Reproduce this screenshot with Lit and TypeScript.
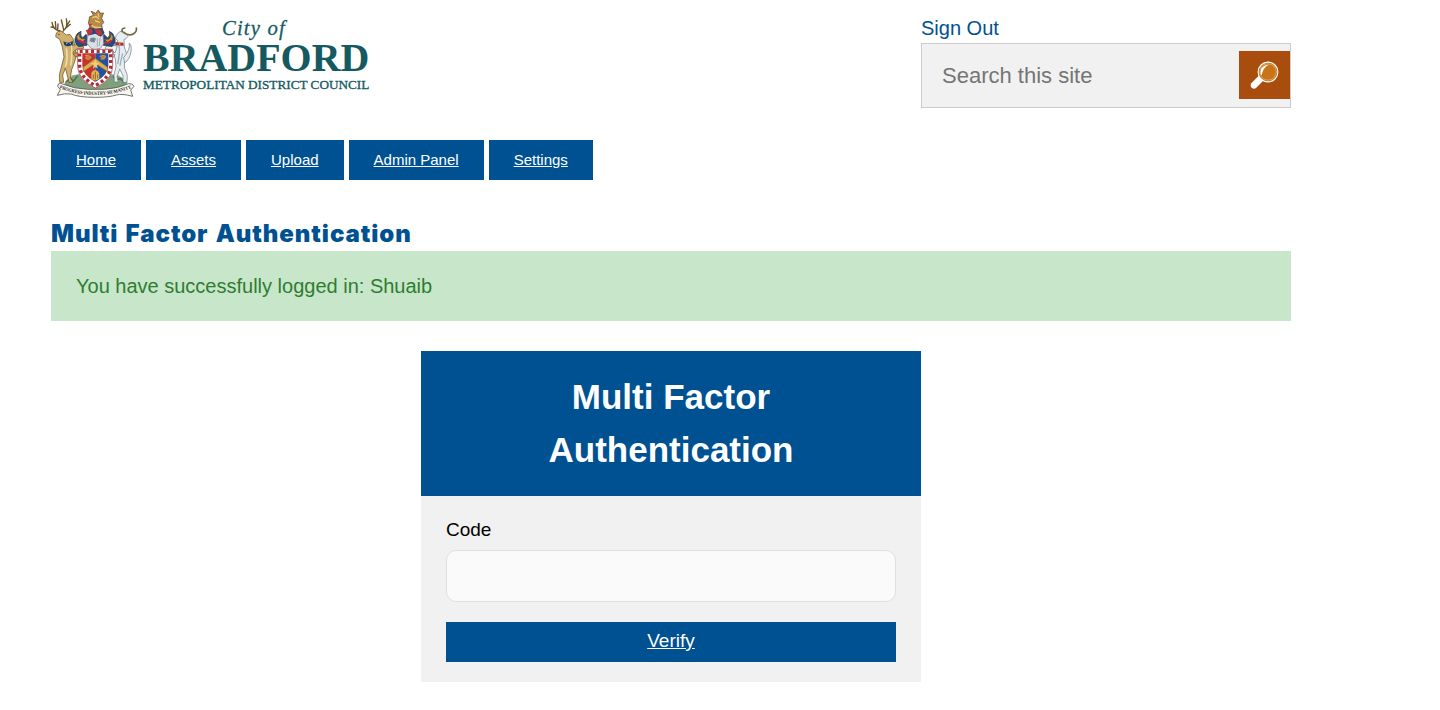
import { LitElement, html, css } from "lit";
import { customElement } from "lit/decorators.js";

@customElement("council-logo")
class CouncilLogo extends LitElement {
  static styles = css`
    :host { display: block; }
    svg { display: block; overflow: visible; }
    text { font-family: "Liberation Serif", serif; fill: #155a60; }
    .city { font-style: italic; font-size: 62px; stroke: #155a60; stroke-width: 0.8; }
    .name { font-size: 119px; font-weight: bold; }
    .council { font-size: 40px; stroke: #155a60; stroke-width: 1; }
    .motto { font-size: 15px; font-weight: bold; fill: #2c2c2c; }
  `;
  render() {
    return html`
      <svg width="320" height="90" viewBox="18 15 960 270" role="img" aria-label="City of Bradford">
        <!-- grassy mound -->
        <path d="M58 236 Q70 212 100 208 L200 208 Q232 212 248 234 L232 246 Q150 270 66 246Z" fill="#7fa07c" />
        <path d="M62 232 l14 -12 10 8 12 -16 M204 214 l10 12 12 -6 12 14" stroke="#47724c" stroke-width="4" fill="none" />
        <!-- stag -->
        <g stroke="#5b4522" stroke-width="2" stroke-linejoin="round">
          <path d="M34 84 L44 76 54 82 64 90 75 88 84 101 92 128 94 152 87 176 80 194 76 218 84 232 72 232 66 208 61 190 53 210 56 232 44 232 43 210 50 182 57 156 52 126 44 103 32 95Z" fill="#d0b06c" />
          <path d="M76 122 L100 118 116 126 114 132 96 132 80 144Z" fill="#d0b06c" />
          <path d="M82 145 L106 142 112 150 92 156Z" fill="#c09a55" />
        </g>
        <path d="M64 130 Q70 160 61 185 M78 120 Q83 148 77 182" stroke="#eedca8" stroke-width="5" fill="none" />
        <g fill="none" stroke="#6b5021" stroke-width="4" stroke-linecap="round">
          <path d="M44 78 Q24 74 21 52 M27 68 L18 66 M33 73 L31 50 M38 76 L39 57" />
          <path d="M54 79 Q70 67 64 42 M60 71 L76 58 M65 63 L74 48 M56 74 L49 45" />
        </g>
        <path d="M55 109 Q71 118 83 107 L84 118 Q70 128 58 120Z" fill="#193c75" />
        <circle cx="65" cy="116" r="2" fill="#e0c36d" /><circle cx="76" cy="115" r="2" fill="#e0c36d" />
        <circle cx="42" cy="88" r="2" fill="#302818" />
        <!-- goat -->
        <g stroke="#657680" stroke-width="2" stroke-linejoin="round">
          <path d="M214 91 L225 79 239 81 249 94 243 101 237 104 238 126 246 151 238 174 239 190 247 211 246 232 234 232 234 212 224 192 216 216 220 231 208 231 207 210 213 185 211 162 205 145 210 120 219 108 211 100Z" fill="#e6edf1" />
          <path d="M217 123 L190 120 180 128 184 133 200 134 210 144Z" fill="#eff3f5" />
          <path d="M210 149 L184 148 181 155 204 158Z" fill="#dbe5eb" />
          <path d="M236 158 Q258 130 252 115 Q261 118 258 140 Q254 164 239 174Z" fill="#e6edf1" />
        </g>
        <path d="M222 119 Q226 142 218 177 M233 145 Q228 164 225 182" stroke="#9db0bd" stroke-width="4" fill="none" />
        <path d="M236 83 Q252 94 266 86 Q276 80 274 69 M232 80 Q228 70 239 69" stroke="#75663f" stroke-width="5" fill="none" stroke-linecap="round" />
        <path d="M211 111 L235 113 236 122 211 121Z" fill="#a93338" />
        <circle cx="224" cy="117" r="2.5" fill="#eed077" />
        <!-- helm, mantling and crest -->
        <path d="M126 121 L101 125 Q84 111 92 95 Q94 85 108 79 Q105 92 113 98 L123 88 133 98Z" fill="#204a89" stroke="#3c3430" stroke-width="2" />
        <path d="M175 121 L201 125 Q217 113 207 94 Q205 84 193 79 Q197 92 188 99 L177 88 167 99Z" fill="#204a89" stroke="#3c3430" stroke-width="2" />
        <path d="M108 80 Q98 93 109 101 L122 102 112 112 Q96 108 95 95 M193 80 Q203 95 191 103 L178 103 190 114 Q205 107 204 96" fill="#cd9745" stroke="#6b4c22" stroke-width="2" />
        <path d="M102 106 Q110 116 124 111 M199 106 Q190 118 178 111" fill="none" stroke="#bb3036" stroke-width="7" />
        <path d="M127 88 Q149 80 174 88 L176 116 166 130 150 134 137 129 126 115Z" fill="#dae1e6" stroke="#727b86" stroke-width="2" />
        <path d="M136 100 Q145 95 153 101 L148 113 133 109Z" fill="#7a8594" />
        <path d="M157 100 L157 125 M165 99 L163 123" stroke="#a3adb7" stroke-width="3" />
        <g transform="translate(-16 -14) scale(1.1 1.15)">
          <path d="M131 82 L137 67 133 60 136 43 147 39 140 28 153 34 160 25 165 34 174 33 169 47 175 58 169 64 173 83Z" fill="#b78b46" stroke="#624b2c" stroke-width="2" />
          <path d="M144 45 L154 42 161 48 M151 53 L164 58 M141 64 L149 70 168 71 M159 34 L162 43" stroke="#f3d483" stroke-width="3" fill="none" />
          <path d="M133 61 L144 62 137 69Z" fill="#c8363a" />
          <path d="M128 79 L139 70 153 75 170 72 177 85 167 95 152 87 137 91Z" fill="#234784" />
          <path d="M126 78 L142 73 145 83 133 93Z M149 76 L167 76 172 89 160 93Z" fill="#bd353b" />
        </g>
        <!-- shield -->
        <path d="M98 133 H203 V185 Q202 225 151 249 Q99 225 98 185Z" fill="#fff" stroke="#9b2430" stroke-width="2" />
        <path d="M104 139 H197 V184 Q195 218 151 242 Q106 218 104 184Z" fill="none" stroke="#af2c35" stroke-width="10" stroke-dasharray="9 8" />
        <path d="M112 145 H151 V231 Q112 211 112 181Z" fill="#c7322e" />
        <path d="M151 145 H190 V181 Q190 211 151 231Z" fill="#2452a0" />
        <path d="M114 187 L151 160 188 187 V200 L151 176 115 200Z" fill="#dcad51" stroke="#755723" stroke-width="1.5" />
        <path d="M151 164 l4 9 9 2 -8 6 2 10 -7 -6 -7 6 2 -10 -8 -6 9 -2Z" fill="#f1ce76" />
        <path d="M120 152 Q132 148 138 156 Q136 166 125 162 Q119 160 124 155 M164 154 Q173 148 182 153 Q182 164 170 163 Q165 161 169 157" fill="#b88436" stroke="#d5a14f" stroke-width="2.5" />
        <path d="M139 221 V208 Q139 197 151 195 Q163 198 163 210 V221 Q151 231 139 221Z" fill="#e1b757" />
        <path d="M145 221 V208 M151 224 V200 M158 220 V208" stroke="#875c26" stroke-width="2.5" />
        <!-- motto scroll -->
        <path d="M38 244 Q38 234 47 235 Q87 252 128 253 H178 Q220 250 251 236 Q262 234 267 244 L257 255 263 274 Q230 265 214 270 Q192 277 151 277 Q100 277 79 267 Q59 264 37 271 L46 254Z" fill="#faf8ee" stroke="#555752" stroke-width="2.5" />
        <path id="motto-curve" d="M43 250 Q99 271 151 270 Q211 269 260 249" fill="none" />
        <text class="motto"><textPath href="#motto-curve" textLength="221" lengthAdjust="spacingAndGlyphs">PROGRESS·INDUSTRY·HUMANITY</textPath></text>
        <text class="city" x="531" y="91" textLength="188" lengthAdjust="spacing">City of</text>
        <text class="name" x="294" y="197" textLength="679" lengthAdjust="spacingAndGlyphs">BRADFORD</text>
        <text class="council" x="294" y="251" textLength="679" lengthAdjust="spacingAndGlyphs">METROPOLITAN DISTRICT COUNCIL</text>
      </svg>`;
  }
}

@customElement("app-root")
class AppRoot extends LitElement {
  static styles = css`
    :host { display: block; box-sizing: border-box; height: 710px; background: #fff; color: #000;
      font-family: "Liberation Sans", Arial, sans-serif; overflow: hidden; }
    * { box-sizing: border-box; }
    .page { width: 1240px; margin-left: 51px; }
    .header { display: flex; justify-content: space-between; height: 140px; padding-top: 10px; }
    .tools { width: 370px; padding-top: 3px; }
    .signout { display: block; height: 30px; line-height: 30px; font-size: 20px; color: #005192; text-decoration: none; }
    .search { display: flex; align-items: center; height: 65px; border: 1px solid #ccc; background: #f1f1f1; }
    .search input { flex: 1; min-width: 0; height: 63px; padding: 0 20px; border: 0; background: transparent; outline: 0;
      font: 22px "Liberation Sans", Arial, sans-serif; }
    .search input::placeholder { color: #757575; opacity: 1; }
    .go { width: 51px; height: 48px; padding: 0; border: 0; background: #a94d0f; margin-bottom: 1px; }
    .go svg { display: block; }
    .nav { display: flex; gap: 5px; height: 40px; }
    .nav a { padding: 0 25px; line-height: 40px; font-size: 15px; color: #fff; background: #005192; }
    h1 { margin: 37px 0 0; height: 34px; line-height: 33px; color: #005192; white-space: nowrap;
      font-family: Inter, sans-serif; font-weight: 900; font-size: 24px; letter-spacing: 0.93px; word-spacing: 1.5px; }
    .message { height: 70px; padding: 0 25px; line-height: 70px; font-size: 20px; color: #2e7d32; background: #c8e6c9; }
    .card { width: 500px; height: 331px; margin: 30px auto 0; background: #f1f1f1; }
    .card h2 { margin: 0; padding: 20px 100px; font-size: 35px; line-height: 52.5px; text-align: center; color: #fff; background: #005192; }
    .form { display: flex; flex-direction: column; padding: 20px 25px; }
    .form label { height: 34px; line-height: 28px; font-size: 19px; }
    .form input { height: 52px; border: 1px solid #e0e0e0; border-radius: 10px; background: #fafafa; outline: 0; }
    .verify { height: 40px; margin-top: 20px; line-height: 38px; font-size: 19px; text-align: center; color: #fff; background: #005192; }
  `;
  nav = ["Home", "Assets", "Upload", "Admin Panel", "Settings"];
  render() {
    return html`
      <div class="page">
        <header class="header">
          <council-logo></council-logo>
          <div class="tools">
            <a class="signout" href="#">Sign Out</a>
            <div class="search">
              <input placeholder="Search this site" />
              <button class="go" aria-label="Search">
                <svg width="51" height="48" viewBox="0 0 51 48">
                  <path d="M21 23.5 L12 32.5 Q11 35.5 13 37 Q15 38.5 17 37 L26 28Z" fill="#fff" />
                  <circle cx="29" cy="21" r="9.9" fill="#c87517" stroke="#fff" stroke-width="1.1" />
                  <circle cx="29" cy="21" r="8.2" fill="none" stroke="#ead0b5" stroke-width=".5" />
                  <path d="M21.6 23.5 Q20.5 14.5 30 13.5 Q24 16.5 22.8 24Z" fill="#fff" />
                </svg>
              </button>
            </div>
          </div>
        </header>
        <nav class="nav">${this.nav.map((label) => html`<a href="#">${label}</a>`)}</nav>
        <h1>Multi Factor Authentication</h1>
        <div class="message">You have successfully logged in: Shuaib</div>
        <section class="card">
          <h2>Multi Factor Authentication</h2>
          <div class="form">
            <label for="code">Code</label>
            <input id="code" />
            <a class="verify" href="#">Verify</a>
          </div>
        </section>
      </div>`;
  }
}
